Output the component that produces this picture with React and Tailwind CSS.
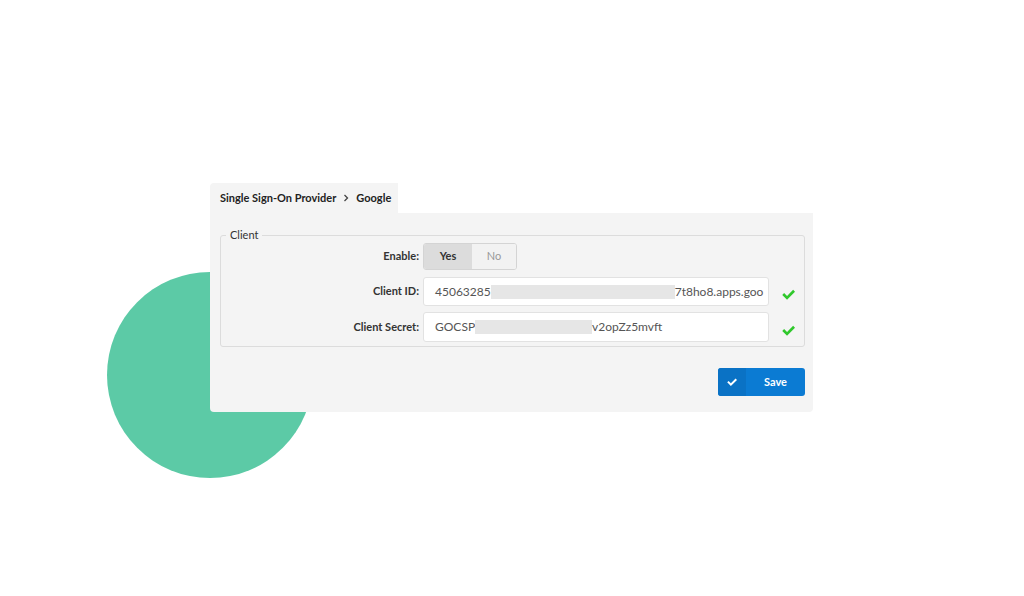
import React from "react";

const Check = ({ className }) => (
  <svg viewBox="0 0 16 16" className={className} fill="currentColor">
    <path d="M13.7 2.3 6.2 9.8 2.6 6.2 0.3 8.5l5.9 5.9 9.8-9.8z" />
  </svg>
);

const Redacted = ({ w }) => (
  <span className={`inline-block h-[14px] shrink-0 bg-[#e6e6e6] ${w}`} />
);

const Row = ({ label, children, check, className }) => (
  <div className={`flex items-center ${className}`}>
    <label className="w-[198px] shrink-0 text-right font-bold text-[#333]">{label}</label>
    <div className="ml-[4px] flex h-full items-center">{children}</div>
    {check && <Check className="ml-[13px] mt-[6px] h-[13px] w-[13px] text-[#30c82c]" />}
  </div>
);

const App = () => {
  return (
    <div className="relative h-[596px] w-[1024px] overflow-hidden bg-white font-['Lato',sans-serif] text-[11px]">
      {/* decorative circle behind the panel */}
      <div className="absolute left-[107px] top-[272px] h-[206px] w-[206px] rounded-full bg-[#5ccaa6]" />

      <div className="relative ml-[210px] mt-[183px] w-[603px]">
        <div className="flex h-[30px]">
          <div className="flex items-center gap-[6px] rounded-tl-[4px] bg-[#f4f4f4] pl-[10px] pr-[7px] font-bold text-[#222]">
            <span>Single Sign-On Provider</span>
            <svg viewBox="0 0 8 8" className="h-[8px] w-[8px] text-[#444]">
              <path d="M2.5 1 5.5 4 2.5 7" fill="none" stroke="currentColor" strokeWidth="1.3" />
            </svg>
            <span>Google</span>
          </div>
        </div>

        <div className="rounded-b-[4px] bg-[#f4f4f4] pb-[16px] pl-[10px] pr-[8px] pt-[15px]">
          <fieldset className="rounded-[3px] border border-[#dcdcdc] pb-[4px]">
            <legend className="ml-[5px] px-[4px] leading-[14px] text-[#333]">Client</legend>

            <Row label="Enable:" className="mt-[1px] h-[27px]">
              <div className="flex h-[27px] w-[94px] overflow-hidden rounded-[3px] border border-[#d4d4d4]">
                <div className="flex w-[48px] items-center justify-center bg-[#dcdcdc] font-bold text-[#333]">
                  Yes
                </div>
                <div className="flex flex-1 items-center justify-center bg-[#f2f2f2] text-[#999]">
                  No
                </div>
              </div>
            </Row>

            <Row label="Client ID:" className="mt-[7px] h-[29px]" check>
              <div className="flex h-[29px] w-[346px] items-center overflow-hidden whitespace-nowrap rounded-[3px] border border-[#e2e2e2] bg-white pl-[11px] text-[12px] text-[#555]">
                <span className="shrink-0">45063285</span>
                <Redacted w="w-[184px]" />
                <span className="shrink-0">7t8ho8.apps.goo</span>
              </div>
            </Row>

            <Row label="Client Secret:" className="mt-[6px] h-[30px]" check>
              <div className="flex h-[30px] w-[346px] items-center overflow-hidden whitespace-nowrap rounded-[3px] border border-[#e2e2e2] bg-white pl-[11px] text-[12px] text-[#555]">
                <span className="shrink-0">GOCSP</span>
                <Redacted w="w-[117px]" />
                <span className="shrink-0">v2opZz5mvft</span>
              </div>
            </Row>
          </fieldset>

          <div className="mt-[21px] flex justify-end">
            <button className="flex h-[28px] w-[87px] overflow-hidden rounded-[3px] bg-[#0b7bd3] font-bold text-white">
              <span className="flex h-full w-[28px] items-center justify-center bg-[#0a72c5]">
                <Check className="h-[10px] w-[10px]" />
              </span>
              <span className="flex flex-1 items-center justify-center">Save</span>
            </button>
          </div>
        </div>
      </div>
    </div>
  );
};

export default App;
